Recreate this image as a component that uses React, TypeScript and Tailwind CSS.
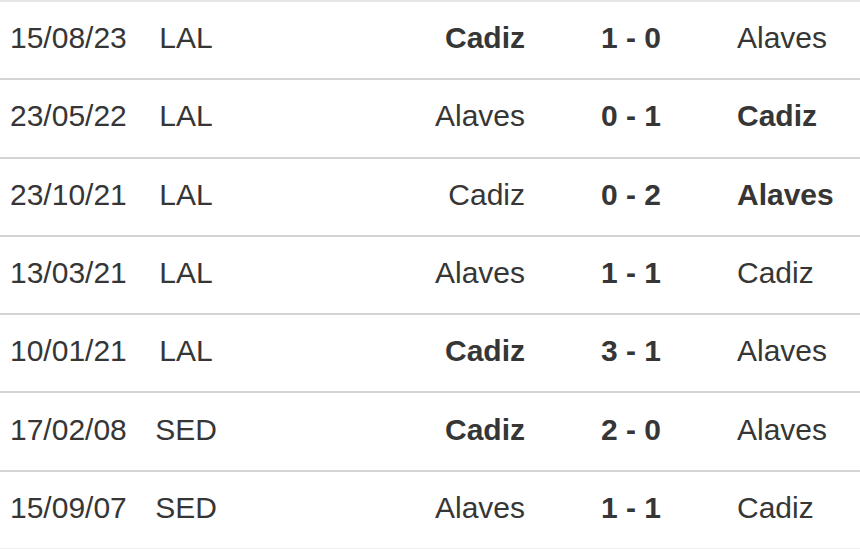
const MATCHES = [
  { date: "15/08/23", comp: "LAL", home: "Cadiz", score: "1 - 0", away: "Alaves", win: "home" },
  { date: "23/05/22", comp: "LAL", home: "Alaves", score: "0 - 1", away: "Cadiz", win: "away" },
  { date: "23/10/21", comp: "LAL", home: "Cadiz", score: "0 - 2", away: "Alaves", win: "away" },
  { date: "13/03/21", comp: "LAL", home: "Alaves", score: "1 - 1", away: "Cadiz", win: "" },
  { date: "10/01/21", comp: "LAL", home: "Cadiz", score: "3 - 1", away: "Alaves", win: "home" },
  { date: "17/02/08", comp: "SED", home: "Cadiz", score: "2 - 0", away: "Alaves", win: "home" },
  { date: "15/09/07", comp: "SED", home: "Alaves", score: "1 - 1", away: "Cadiz", win: "" },
];

export default function App() {
  return (
    <div className="w-[860px] h-[549px] bg-white flex flex-col text-[30px] text-[#363636] font-['Liberation_Sans',Arial,sans-serif] border-t-2 border-[#e6e6e6]">
      {MATCHES.map((m, i) => (
        <div
          key={i}
          className={
            i === 0
              ? "flex-1 flex items-center pb-[5px]"
              : "flex-1 flex items-center pb-[5px] border-t-2 border-[#d4d4d4]"
          }
        >
          <div className="w-[140px] pl-[10px] whitespace-nowrap">{m.date}</div>
          <div className="w-[92px] text-center">{m.comp}</div>
          <div className={m.win === "home" ? "w-[293px] text-right font-bold" : "w-[293px] text-right"}>{m.home}</div>
          <div className="w-[212px] text-center font-bold">{m.score}</div>
          <div className={m.win === "away" ? "flex-1 font-bold" : "flex-1"}>{m.away}</div>
        </div>
      ))}
      <div className="h-px bg-[#eeeeee]" />
    </div>
  );
}
